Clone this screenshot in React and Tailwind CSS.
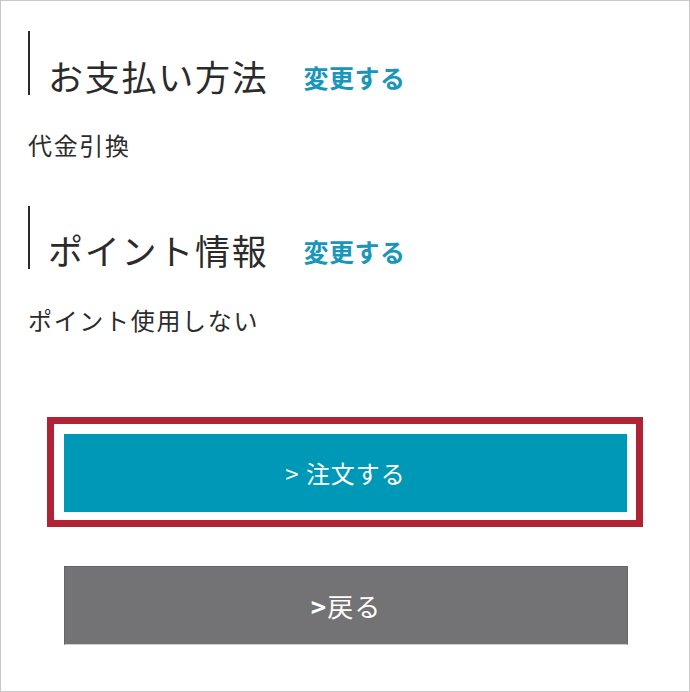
export default function App() {
  const font = { fontFamily: '"Noto Sans CJK JP", "Noto Sans", sans-serif' };
  return (
    <div
      style={font}
      className="w-[690px] h-[692px] border border-[#c8c8c8] bg-white text-[#2b2b2b] overflow-hidden"
    >
      <div className="pl-[27px] pt-[30px]">
        <div className="h-[64px] border-l-2 border-[#2a2a2a] pl-[18px] flex items-end pb-[2px]">
          <h2 className="text-[35px] leading-none tracking-[0.05em] font-normal text-[#2b2b2b]">
            お支払い方法
          </h2>
          <a className="ml-[35px] mb-[3px] text-[25px] leading-none font-bold text-[#1a96b8] tracking-[0.02em]">
            変更する
          </a>
        </div>
        <p className="mt-[38px] text-[24px] leading-none tracking-[0.07em]">代金引換</p>

        <div className="mt-[49px] h-[63px] border-l-2 border-[#2a2a2a] pl-[18px] flex items-end pb-[2px]">
          <h2 className="text-[35px] leading-none tracking-[0.05em] font-normal text-[#2b2b2b]">
            ポイント情報
          </h2>
          <a className="ml-[35px] mb-[3px] text-[25px] leading-none font-bold text-[#1a96b8] tracking-[0.02em]">
            変更する
          </a>
        </div>
        <p className="mt-[39px] text-[24px] leading-none tracking-[0.07em]">ポイント使用しない</p>
      </div>

      <div className="ml-[46px] mt-[85px] w-[596px] h-[110px] border-[7px] border-[#b02335] pl-[10px] pt-[10px]">
        <button className="w-[563px] h-[78px] bg-[#0098b7] text-white text-[24px] tracking-[0.04em] flex items-center justify-center">
          &gt; 注文する
        </button>
      </div>

      <button className="ml-[63px] mt-[39px] w-[564px] h-[79px] bg-[#737274] border border-[#666] border-b-[#cfcfcf] text-white text-[26px] font-normal tracking-[0.04em] flex items-center justify-center">
        <span className="font-bold">&gt;</span>戻る
      </button>
    </div>
  );
}
